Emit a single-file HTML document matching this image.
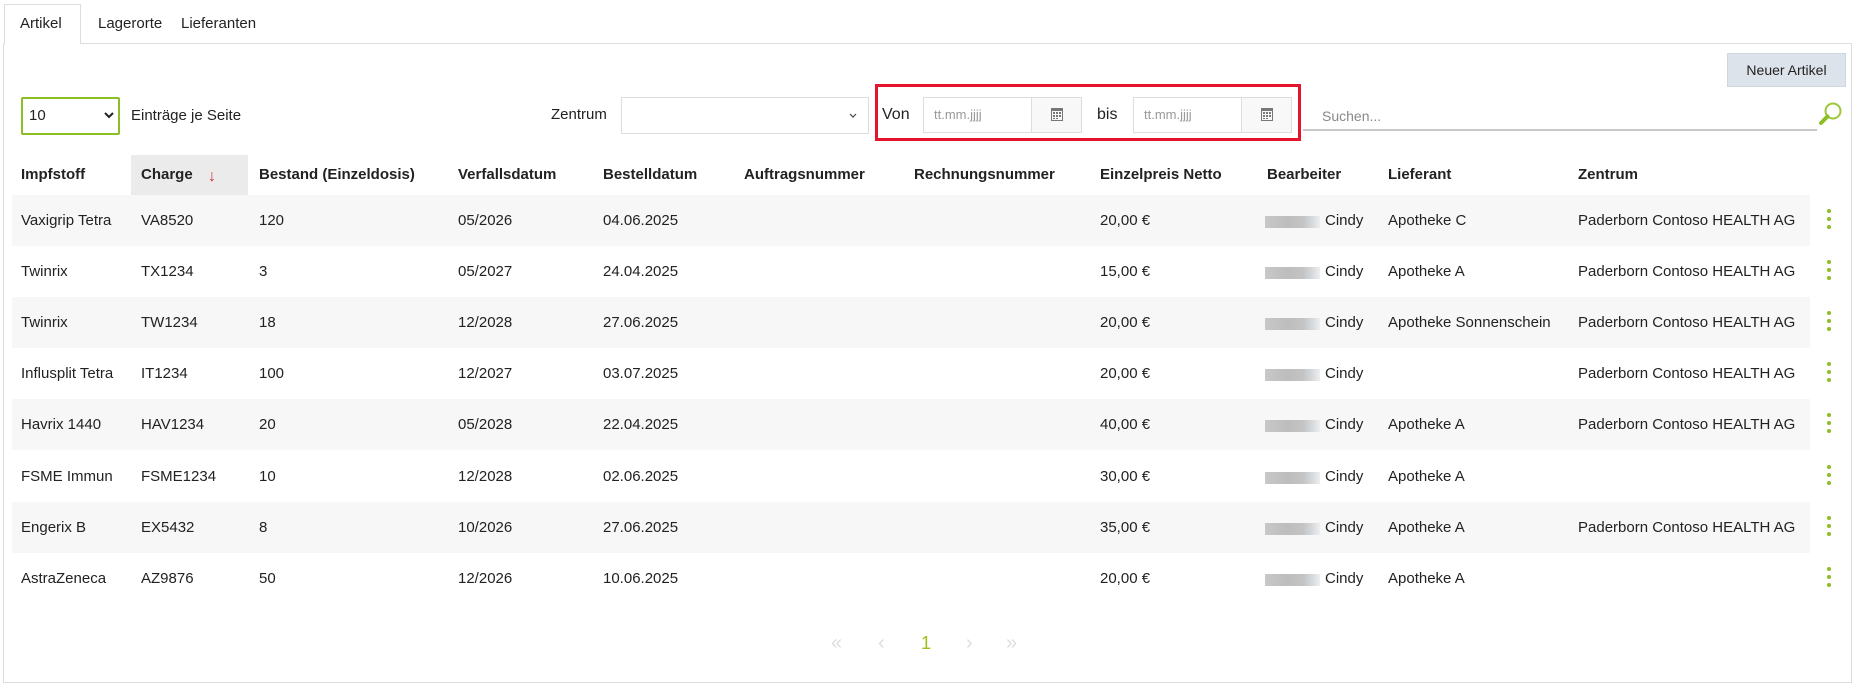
<!DOCTYPE html>
<html><head><meta charset="utf-8">
<style>
*{box-sizing:border-box;margin:0;padding:0}
body{width:1856px;height:687px;background:#fff;font-family:"Liberation Sans",sans-serif;font-size:15px;color:#222;position:relative;overflow:hidden}
.a{position:absolute;white-space:nowrap}
.panel{position:absolute;left:3px;top:43px;width:1849px;height:640px;border:1px solid #ddd;border-top:1px solid #ddd}
.tab{position:absolute;top:4px;height:40px;line-height:40px;font-size:15px}
.th{position:absolute;top:155px;height:40px;line-height:40px;font-weight:bold;font-size:15px}
.row{position:absolute;left:12px;width:1798px;height:51px}
.cell{position:absolute;line-height:51px;font-size:15px}
.dots{position:absolute;left:1827px;width:4px}
.dots i{display:block;width:4px;height:4px;border-radius:2px;background:#8cbf26;margin-bottom:4px}
.blur{position:absolute;height:12px;width:55px;background:linear-gradient(90deg,#c8c8c8,#bdbdbd 40%,#c4c4c4 70%,#d4d8dc 85%,#eee)}
.di{position:absolute;top:97px;height:36px;border:1px solid #ddd;background:#fff}
.di span{position:absolute;left:10px;top:0;line-height:34px;color:#999;font-size:13px}
.cal{position:absolute;right:0;top:0;width:50px;height:34px;border-left:1px solid #ddd;background:#f8f8f8}
</style></head><body>
<div class="panel"></div>
<div class="a" style="left:4px;top:4px;width:77px;height:40px;border:1px solid #ddd;border-bottom:none;background:#fff"></div>
<div class="tab a" style="left:20px">Artikel</div>
<div class="tab a" style="left:98px">Lagerorte</div>
<div class="tab a" style="left:181px">Lieferanten</div>

<div class="a" style="left:1727px;top:53px;width:119px;height:34px;background:#dde3ea;border:1px solid #cfd6de;line-height:32px;text-align:center;font-size:14px">Neuer Artikel</div>

<div class="a" style="left:21px;top:97px;width:99px;height:38px;border:2px solid #8cbf26;border-radius:2px;line-height:34px;padding-left:6px;font-size:15px">10</div>
<svg class="a" style="left:104px;top:111px" width="10" height="8"><path d="M1 2 L5 6 L9 2" stroke="#222" stroke-width="2" fill="none"/></svg>
<div class="a" style="left:131px;top:106px;line-height:20px">Einträge je Seite</div>

<div class="a" style="left:551px;top:105px;line-height:20px">Zentrum</div>
<div class="a" style="left:621px;top:97px;width:248px;height:37px;border:1px solid #ddd"></div>
<svg class="a" style="left:849px;top:113px" width="8" height="6"><path d="M1 1 L4 4 L7 1" stroke="#444" stroke-width="1.2" fill="none"/></svg>

<div class="a" style="left:875px;top:84px;width:426px;height:57px;border:3px solid #e5142c"></div>
<div class="a" style="left:882px;top:105px;line-height:20px;font-size:16px">Von</div>
<div class="di" style="left:923px;width:159px"><span>tt.mm.jjjj</span><div class="cal"><svg style="position:absolute;left:19px;top:9px" width="12" height="14"><rect x="0" y="1" width="12" height="13" fill="#777"/><rect x="1" y="4" width="10" height="9" fill="#f8f8f8"/><g fill="#777"><rect x="2" y="5" width="2" height="2"/><rect x="5" y="5" width="2" height="2"/><rect x="8" y="5" width="2" height="2"/><rect x="2" y="8" width="2" height="2"/><rect x="5" y="8" width="2" height="2"/><rect x="8" y="8" width="2" height="2"/><rect x="2" y="11" width="2" height="1"/><rect x="5" y="11" width="2" height="1"/></g></svg></div></div>
<div class="a" style="left:1097px;top:105px;line-height:20px;font-size:16px">bis</div>
<div class="di" style="left:1133px;width:159px"><span>tt.mm.jjjj</span><div class="cal"><svg style="position:absolute;left:19px;top:9px" width="12" height="14"><rect x="0" y="1" width="12" height="13" fill="#777"/><rect x="1" y="4" width="10" height="9" fill="#f8f8f8"/><g fill="#777"><rect x="2" y="5" width="2" height="2"/><rect x="5" y="5" width="2" height="2"/><rect x="8" y="5" width="2" height="2"/><rect x="2" y="8" width="2" height="2"/><rect x="5" y="8" width="2" height="2"/><rect x="8" y="8" width="2" height="2"/><rect x="2" y="11" width="2" height="1"/><rect x="5" y="11" width="2" height="1"/></g></svg></div></div>

<div class="a" style="left:1303px;top:129px;width:514px;height:2px;background:#c8c8c8"></div>
<div class="a" style="left:1322px;top:106px;line-height:20px;color:#888;font-size:14px">Suchen...</div>
<svg class="a" style="left:1815px;top:100px" width="30" height="30"><circle cx="18" cy="11" r="7.5" stroke="#9cc83a" stroke-width="2" fill="none"/><path d="M12.5 16.5 L6 23" stroke="#8cbf26" stroke-width="4" stroke-linecap="round"/></svg>

<div class="a" style="left:131px;top:155px;width:117px;height:40px;background:#ebebeb"></div>
<div class="th a" style="left:21px">Impfstoff</div>
<div class="th a" style="left:141px">Charge</div>
<div class="a" style="left:208px;top:168px;font-size:16px;color:#c33">↓</div>
<div class="th a" style="left:259px">Bestand (Einzeldosis)</div>
<div class="th a" style="left:458px">Verfallsdatum</div>
<div class="th a" style="left:603px">Bestelldatum</div>
<div class="th a" style="left:744px">Auftragsnummer</div>
<div class="th a" style="left:914px">Rechnungsnummer</div>
<div class="th a" style="left:1100px">Einzelpreis Netto</div>
<div class="th a" style="left:1267px">Bearbeiter</div>
<div class="th a" style="left:1388px">Lieferant</div>
<div class="th a" style="left:1578px">Zentrum</div>

<div id="rows"></div>
<script>
var d=[["Vaxigrip Tetra","VA8520","120","05/2026","04.06.2025","20,00 €","Apotheke C","Paderborn Contoso HEALTH AG"],
["Twinrix","TX1234","3","05/2027","24.04.2025","15,00 €","Apotheke A","Paderborn Contoso HEALTH AG"],
["Twinrix","TW1234","18","12/2028","27.06.2025","20,00 €","Apotheke Sonnenschein","Paderborn Contoso HEALTH AG"],
["Influsplit Tetra","IT1234","100","12/2027","03.07.2025","20,00 €","","Paderborn Contoso HEALTH AG"],
["Havrix 1440","HAV1234","20","05/2028","22.04.2025","40,00 €","Apotheke A","Paderborn Contoso HEALTH AG"],
["FSME Immun","FSME1234","10","12/2028","02.06.2025","30,00 €","Apotheke A",""],
["Engerix B","EX5432","8","10/2026","27.06.2025","35,00 €","Apotheke A","Paderborn Contoso HEALTH AG"],
["AstraZeneca","AZ9876","50","12/2026","10.06.2025","20,00 €","Apotheke A",""]];
var xs=[21,141,259,458,603,1100,1388,1578],h="";
d.forEach(function(r,i){var y=195+i*51.1;
h+='<div class="row" style="top:'+y+'px;background:'+(i%2?'#fff':'#f7f7f7')+'"></div>';
r.forEach(function(t,j){h+='<div class="cell a" style="left:'+xs[j]+'px;top:'+y+'px">'+t+'</div>';});
h+='<div class="blur" style="left:1265px;top:'+(y+21)+'px"></div><div class="cell a" style="left:1325px;top:'+y+'px">Cindy</div>';
h+='<div class="dots" style="top:'+(y+14)+'px"><i></i><i></i><i></i></div>';});
document.getElementById("rows").innerHTML=h;
</script>

<div class="a" style="left:831px;top:632px;font-size:20px;color:#ddd;line-height:22px">«</div>
<div class="a" style="left:878px;top:632px;font-size:20px;color:#ddd;line-height:22px">‹</div>
<div class="a" style="left:921px;top:632px;font-size:18px;color:#9cbf1a;line-height:22px">1</div>
<div class="a" style="left:966px;top:632px;font-size:20px;color:#ddd;line-height:22px">›</div>
<div class="a" style="left:1006px;top:632px;font-size:20px;color:#ddd;line-height:22px">»</div>
</body></html>
